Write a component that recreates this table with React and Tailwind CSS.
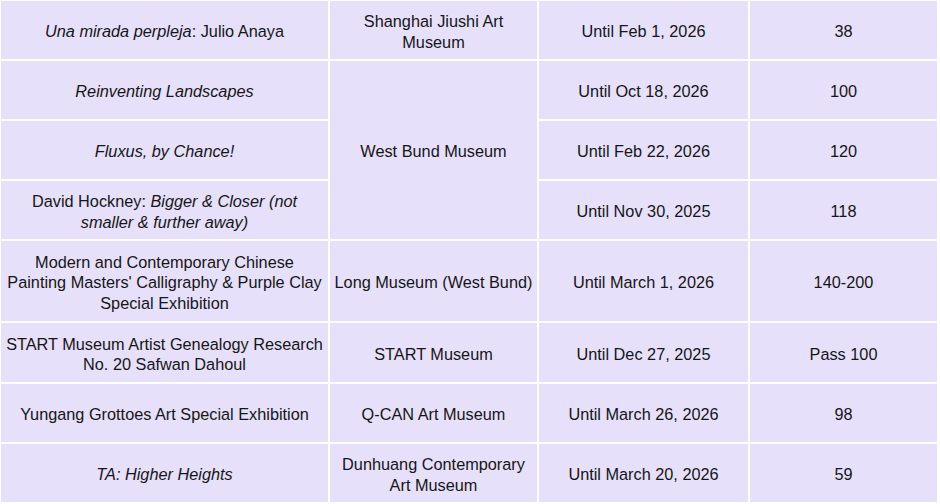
const rows = [
  {
    title: (
      <>
        <i>Una mirada perpleja</i>: Julio Anaya
      </>
    ),
    venue: (
      <>
        Shanghai Jiushi Art
        <br />
        Museum
      </>
    ),
    date: "Until Feb 1, 2026",
    price: "38",
  },
  { title: <i>Reinventing Landscapes</i>, venue: "West Bund Museum", span: 3, date: "Until Oct 18, 2026", price: "100" },
  { title: <i>Fluxus, by Chance!</i>, date: "Until Feb 22, 2026", price: "120" },
  {
    title: (
      <>
        David Hockney: <i>Bigger &amp; Closer (not</i>
        <br />
        <i>smaller &amp; further away)</i>
      </>
    ),
    date: "Until Nov 30, 2025",
    price: "118",
  },
  {
    title: (
      <>
        Modern and Contemporary Chinese
        <br />
        Painting Masters' Calligraphy &amp; Purple Clay
        <br />
        Special Exhibition
      </>
    ),
    venue: "Long Museum (West Bund)",
    date: "Until March 1, 2026",
    price: "140-200",
  },
  {
    title: (
      <>
        START Museum Artist Genealogy Research
        <br />
        No. 20 Safwan Dahoul
      </>
    ),
    venue: "START Museum",
    date: "Until Dec 27, 2025",
    price: "Pass 100",
  },
  {
    title: "Yungang Grottoes Art Special Exhibition",
    venue: "Q-CAN Art Museum",
    date: "Until March 26, 2026",
    price: "98",
  },
  {
    title: <i>TA: Higher Heights</i>,
    venue: (
      <>
        Dunhuang Contemporary
        <br />
        Art Museum
      </>
    ),
    date: "Until March 20, 2026",
    price: "59",
  },
];

function Cell({ children, className = "" }) {
  return (
    <div className={"bg-[#e6e0fb] flex items-center justify-center text-center whitespace-nowrap pt-[3px] " + className}>
      <span>{children}</span>
    </div>
  );
}

export default function App() {
  return (
    <div
      className="w-[940px] h-[504px] bg-white pt-[1px] pl-[1px] text-[16.3px] leading-[20.5px] text-[#161616]"
      style={{ fontFamily: '"Liberation Sans", Arial, sans-serif' }}
    >
      <div className="grid grid-cols-[327px_207px_209px_187px] grid-rows-[58px_58px_58px_58px_80px_59px_58px_58px] gap-[2px]">
        {rows.map((r, i) => (
          <Row key={i} r={r} />
        ))}
      </div>
    </div>
  );
}

function Row({ r }) {
  return (
    <>
      <Cell>{r.title}</Cell>
      {r.venue && <Cell className={r.span === 3 ? "row-span-3" : ""}>{r.venue}</Cell>}
      <Cell>{r.date}</Cell>
      <Cell>{r.price}</Cell>
    </>
  );
}
